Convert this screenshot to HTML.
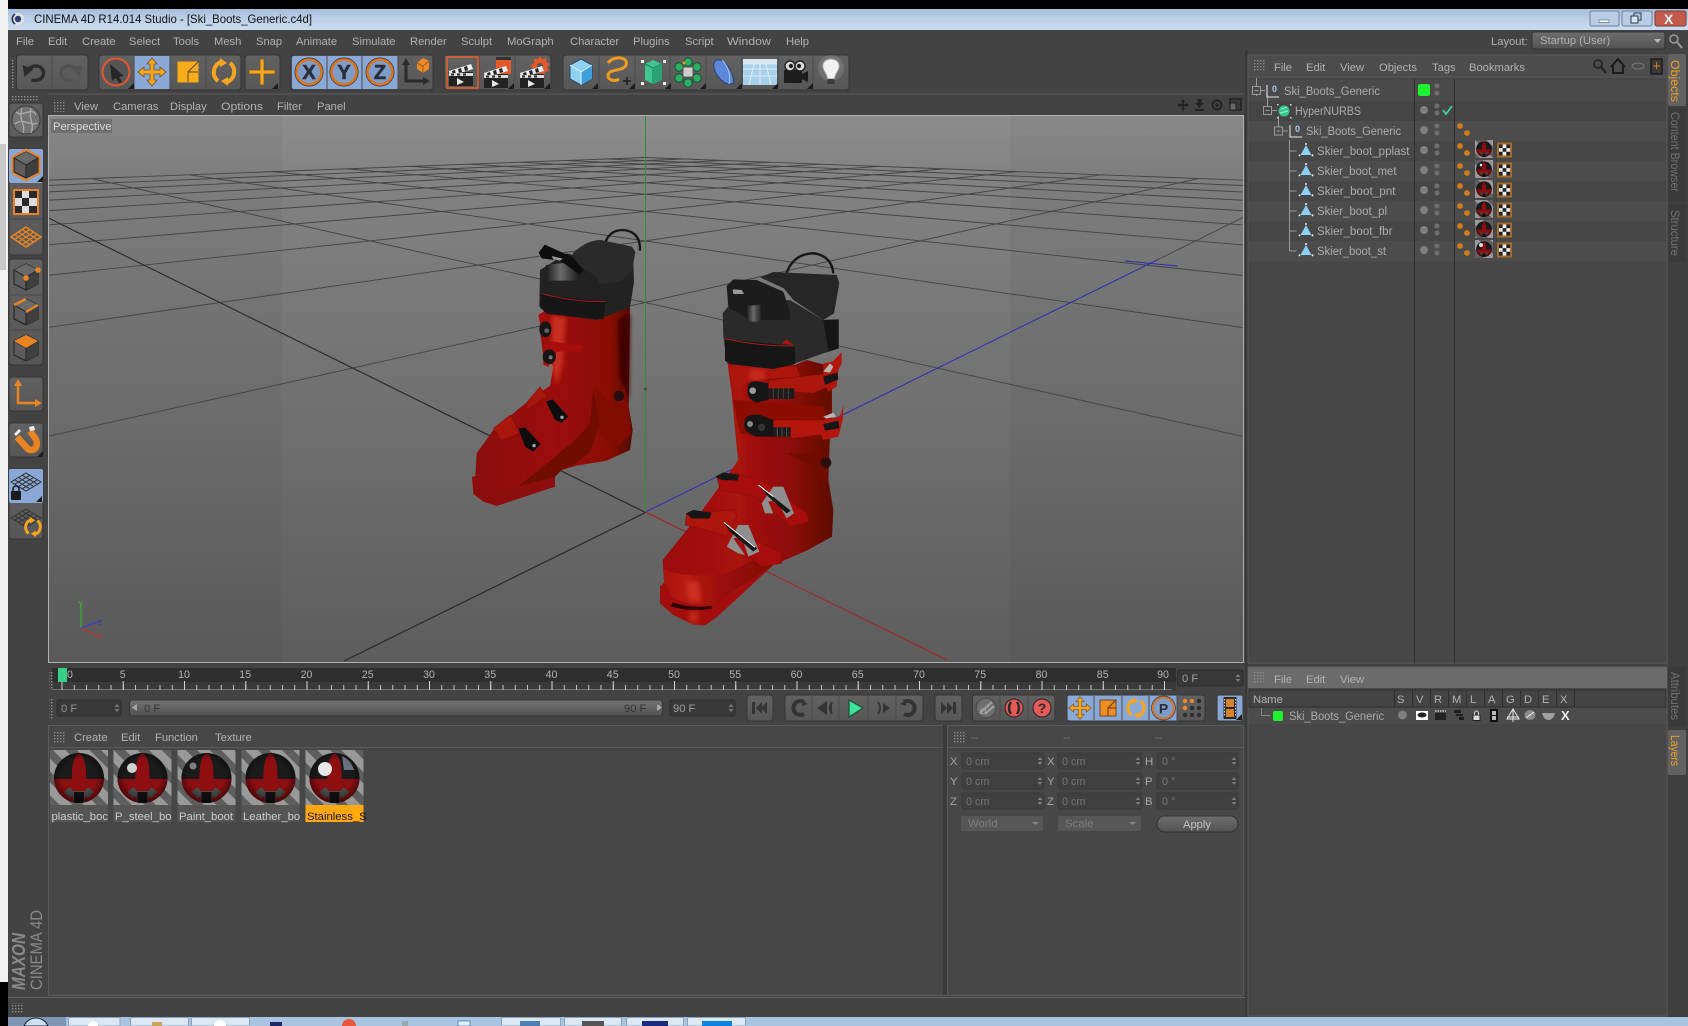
<!DOCTYPE html>
<html><head><meta charset="utf-8"><title>CINEMA 4D</title>
<style>
html,body{margin:0;padding:0;background:#000;width:1688px;height:1026px;overflow:hidden}
svg{display:block;overflow:hidden}
text{font-family:"Liberation Sans",sans-serif;white-space:pre}
.m{font-size:11.2px;fill:#b2b2b2}
.tr{font-size:11.5px;fill:#adadad}
.d{font-size:10.8px;fill:#777}
.l{font-size:11.4px;fill:#a8a8a8}
.n{font-size:10.6px;fill:#b4b4b4;text-anchor:middle}
.v{font-size:11.4px;fill:#7e7e7e}
</style></head><body>
<svg width="1688" height="1026" viewBox="0 0 1688 1026" xmlns="http://www.w3.org/2000/svg">
<defs>
<linearGradient id="tb" x1="0" y1="0" x2="0" y2="1"><stop offset="0" stop-color="#a6bdd9"/><stop offset=".5" stop-color="#bcd0e7"/><stop offset="1" stop-color="#cbdcef"/></linearGradient>
<linearGradient id="vp" x1="0" y1="0" x2="0" y2="1"><stop offset="0" stop-color="#8d8d8d"/><stop offset=".12" stop-color="#828282"/><stop offset="1" stop-color="#5d5d5d"/></linearGradient>
<linearGradient id="btn" x1="0" y1="0" x2="0" y2="1"><stop offset="0" stop-color="#626262"/><stop offset="1" stop-color="#575757"/></linearGradient>
<linearGradient id="sl" x1="0" y1="0" x2="0" y2="1"><stop offset="0" stop-color="#747474"/><stop offset="1" stop-color="#505050"/></linearGradient>
<linearGradient id="drop" x1="0" y1="0" x2="0" y2="1"><stop offset="0" stop-color="#6e6e6e"/><stop offset="1" stop-color="#525252"/></linearGradient>
<linearGradient id="red1" gradientUnits="userSpaceOnUse" x1="106" y1="0" x2="578" y2="0"><stop offset="0" stop-color="#8a0d07"/><stop offset=".5" stop-color="#9c0f08"/><stop offset=".85" stop-color="#8a0c06"/><stop offset="1" stop-color="#4f0704"/></linearGradient>
<linearGradient id="red2" x1="0" y1="0" x2="1" y2="0"><stop offset="0" stop-color="#9c0f08"/><stop offset=".45" stop-color="#a8120a"/><stop offset=".75" stop-color="#8d0c07"/><stop offset="1" stop-color="#5c0805"/></linearGradient>
<linearGradient id="red3" x1="0" y1="0" x2="1" y2="0"><stop offset="0" stop-color="#a8130a"/><stop offset=".2" stop-color="#b81c12"/><stop offset=".35" stop-color="#a8130a"/><stop offset="1" stop-color="#7d0a05"/></linearGradient>
<linearGradient id="gc" x1="0" y1="0" x2="1" y2="0"><stop offset="0" stop-color="#1d1d1d"/><stop offset=".45" stop-color="#6a6a6a"/><stop offset="1" stop-color="#1f1f1f"/></linearGradient>
<filter id="sm" x="-5%" y="-5%" width="110%" height="110%"><feGaussianBlur stdDeviation="1.1"/></filter>
<filter id="bl" x="-50%" y="-50%" width="200%" height="200%"><feGaussianBlur stdDeviation="6"/></filter>
<pattern id="grip" width="3" height="3" patternUnits="userSpaceOnUse"><rect width="1.4" height="1.4" fill="#8d8d8d"/></pattern>
<pattern id="st" width="17" height="17" patternUnits="userSpaceOnUse" patternTransform="rotate(-45)"><rect width="17" height="17" fill="#5e5e5e"/><rect width="9" height="17" fill="#999"/></pattern>
<pattern id="tk" x="61.5" y="685" width="12.25" height="5" patternUnits="userSpaceOnUse"><rect width="1" height="5" fill="#c4c4c4"/></pattern>
<pattern id="tk5" x="61.5" y="681" width="61.25" height="9" patternUnits="userSpaceOnUse"><rect width="1" height="9" fill="#d4d4d4"/></pattern>
<clipPath id="vc"><rect x="49" y="116" width="1194" height="546"/></clipPath>
<clipPath id="sc"><circle cx="29" cy="28" r="25"/></clipPath>
<radialGradient id="shade" cx=".5" cy=".48" r=".5"><stop offset=".6" stop-color="#000" stop-opacity="0"/><stop offset="1" stop-color="#000" stop-opacity=".55"/></radialGradient>
<symbol id="ball" viewBox="0 0 58 55" width="58" height="55"><g clip-path="url(#sc)"><rect width="58" height="55" fill="#1b1b1b"/><rect y="29" width="58" height="26" fill="#8d0f12"/><path d="M22 30 Q21 8 29 3 Q37 8 36 30Z" fill="#8d0f12"/><path d="M14 42 L20 37 L23 41 L35 41 L38 37 L44 42 L38 48 L35 46 L35 54 L23 54 L23 46 L20 48Z" fill="#4a4a4a"/><path d="M24 42 H34 V54 H24Z" fill="#111"/><rect width="58" height="55" fill="url(#shade)"/></g></symbol>
<g id="cube"><path d="M0 -13 L12 -7 V7 L0 13 L-12 7 V-7Z" fill="#5c5c5c" stroke="#2b2b2b" stroke-width="1.3"/><path d="M0 0 L12 -7 V7 L0 13Z" fill="#3f3f3f"/><path d="M0 -13 L12 -7 L0 0 L-12 -7Z" fill="#6a6a6a"/><path d="M0 0 V13 M0 0 L12 -7 M0 0 L-12 -7" stroke="#2b2b2b" stroke-width="1.2" fill="none"/></g>
<g id="clap"><rect x="-13" y="-2" width="24" height="14" fill="#222"/><path d="M-13 -3 L9 -10 L11 -5 L-12 2Z" fill="#eee"/><path d="M-10 -3 l3 -1 l1 4 l-3 1z M-4 -5 l3 -1 l1 4 l-3 1z M2 -7 l3 -1 l1 4 l-3 1z" fill="#222"/><rect x="-13" y="-1" width="24" height="3" fill="#ddd"/><path d="M-11 -.5 h3 v2 h-3z M-5 -.5 h3 v2 h-3z M1 -.5 h3 v2 h-3z" fill="#222"/><path d="M-5 4 L2 8 L-5 11Z" fill="#e8e8e8"/></g>
<g id="mv"><path d="M0 -14 L5 -8 H2 V-2 H8 V-5 L14 0 L8 5 V2 H2 V8 H5 L0 14 L-5 8 H-2 V2 H-8 V5 L-14 0 L-8 -5 V-2 H-2 V-8 H-5Z" fill="#f6a520" stroke="#6a5124" stroke-width=".8"/></g>
<g id="rot"><path d="M-3 -10 A11 11 0 0 0 -6 9" stroke="#f6a520" stroke-width="4" fill="none"/><path d="M3 10 A11 11 0 0 0 6 -9" stroke="#f6a520" stroke-width="4" fill="none"/><path d="M-4 -14 L3 -9 L-4 -5Z M4 14 L-3 9 L4 5Z" fill="#f6a520"/></g>
<g id="dots"><circle cx="0" cy="-4" r="2.5" fill="#6f6f6f"/><circle cx="0" cy="3" r="2.5" fill="#6f6f6f"/></g>
<g id="tag"><circle cx="0" cy="-5" r="2.9" fill="#d07c1c"/><circle cx="7" cy="2" r="2.9" fill="#d07c1c"/></g>
<g id="chk"><rect x="-7.5" y="-7.5" width="15" height="15" fill="#a56a2c"/><rect x="-5.5" y="-5.5" width="11" height="11" fill="#eee"/><path d="M-5.5 -5.5 h3.6 v3.6 h-3.6z M1.8 -5.5 h3.7 v3.6 h-3.7z M-1.9 -1.9 h3.7 v3.7 h-3.7z M-5.5 1.8 h3.6 v3.7 h-3.6z M1.8 1.8 h3.7 v3.7 h-3.7z" fill="#222"/></g>
<g id="mesh"><path d="M-5.5 5 L0 -5 L5.5 5Z" fill="#8fd0f5"/><circle cy="-6" r="1" fill="#eee"/><circle cx="-6.5" cy="5.4" r="1" fill="#eee"/><circle cx="6.5" cy="5.4" r="1" fill="#eee"/></g>
<g id="null0"><path d="M-6 -6 V6 H6" stroke="#c8c8c8" stroke-width="1.3" fill="none"/><text x="-1" y="1" font-size="9" fill="#a9c8ee" font-weight="bold">0</text></g>
<g id="sp"><path d="M-2.5 -1 L0 -4 L2.5 -1Z M-2.5 1 L0 4 L2.5 1Z" fill="#7c7c7c"/></g>
<g id="corner"><path d="M6 0 V6 H0Z" fill="#1c1c1c"/></g>
</defs>

<!-- chrome -->
<rect width="1688" height="1026" fill="#000"/>
<rect x="0" y="0" width="8" height="982" fill="#f0f0f0"/>
<rect x="0" y="144" width="6" height="126" fill="#c9c9c9"/>
<rect x="8" y="9" width="1680" height="21" fill="url(#tb)"/>
<rect x="8" y="30" width="1680" height="987" fill="#434343"/>
<circle cx="18" cy="19" r="6" fill="#dfe3e8"/><circle cx="18" cy="19" r="3.2" fill="#2e3f6c"/><path d="M15 14 a6 6 0 0 0 0 10" stroke="#1e2a4e" stroke-width="1.6" fill="none"/>
<text x="34" y="23" font-size="12" fill="#111" textLength="278" lengthAdjust="spacingAndGlyphs">CINEMA 4D R14.014 Studio - [Ski_Boots_Generic.c4d]</text>
<rect x="1590" y="11" width="29" height="15" rx="2" fill="#b7cde6" stroke="#6f8198"/><rect x="1599" y="20" width="10" height="2.5" fill="#fff" stroke="#4a5a6e" stroke-width=".6"/>
<rect x="1622" y="11" width="30" height="15" rx="2" fill="#b7cde6" stroke="#6f8198"/><rect x="1634" y="13" width="7" height="7" fill="none" stroke="#26364a"/><rect x="1631" y="16" width="7" height="7" fill="#d5e2f0" stroke="#26364a"/>
<rect x="1655" y="11" width="31" height="15" rx="2" fill="#c45a4c" stroke="#7a3a36"/><text x="1664" y="24" font-size="14" font-weight="bold" fill="#f4f4f4">X</text>

<!-- menu -->
<text class="m" x="16" y="45">File</text><text class="m" x="48" y="45">Edit</text><text class="m" x="82" y="45">Create</text><text class="m" x="129" y="45">Select</text><text class="m" x="173" y="45">Tools</text><text class="m" x="214" y="45">Mesh</text><text class="m" x="256" y="45">Snap</text><text class="m" x="296" y="45">Animate</text><text class="m" x="352" y="45">Simulate</text><text class="m" x="410" y="45">Render</text><text class="m" x="461" y="45">Sculpt</text><text class="m" x="507" y="45">MoGraph</text><text class="m" x="570" y="45">Character</text><text class="m" x="633" y="45">Plugins</text><text class="m" x="685" y="45">Script</text><text class="m" x="727" y="45" textLength="44" lengthAdjust="spacingAndGlyphs">Window</text><text class="m" x="786" y="45">Help</text>
<text class="m" x="1491" y="45">Layout:</text>
<rect x="1532" y="32" width="133" height="17" rx="2" fill="url(#drop)" stroke="#333"/><text class="m" x="1540" y="44" fill="#c8c8c8">Startup (User)</text><path d="M1654 39 h7 l-3.5 4z" fill="#bbb"/>
<circle cx="1674" cy="39" r="4" fill="none" stroke="#999" stroke-width="1.5"/><path d="M1677 42 L1682 48" stroke="#999" stroke-width="2"/>

<!-- top toolbar groups -->
<g fill="url(#btn)" stroke="#353535">
<rect x="16.5" y="55" width="71.5" height="35" rx="3"/><rect x="99" y="55" width="142" height="35" rx="3"/><rect x="245" y="55" width="35" height="35" rx="3"/><rect x="291" y="55" width="142" height="35" rx="3"/><rect x="444" y="55" width="107" height="35" rx="3"/><rect x="563" y="55" width="286" height="35" rx="3"/>
</g>
<rect x="134" y="56" width="36" height="33" fill="#89a8d6"/>
<rect x="292" y="56" width="106" height="33" rx="2" fill="#89a8d6"/>
<path d="M52 56 V89 M134 56 V89 M170 56 V89 M206 56 V89 M327 56 V89 M362 56 V89 M398 56 V89 M479 56 V89 M515 56 V89 M599 56 V89 M635 56 V89 M670 56 V89 M706 56 V89 M742 56 V89 M778 56 V89 M813 56 V89" stroke="#4a4a4a"/>
<!-- undo redo -->
<g transform="translate(34.5 72)"><path d="M-7 -1 C-3 -9 10 -7 9 2 C8 8 2 9 -3 8" stroke="#2b2b2b" stroke-width="3.4" fill="none"/><path d="M-12 -7 L-1 -3 L-10 5Z" fill="#2b2b2b"/></g>
<g transform="translate(70 72)"><path d="M7 -1 C3 -9 -10 -7 -9 2 C-8 8 -2 9 3 8" stroke="#525252" stroke-width="3.4" fill="none"/><path d="M12 -7 L1 -3 L10 5Z" fill="#525252"/></g>
<!-- live select -->
<g transform="translate(116 72)"><circle r="13.5" fill="#555" stroke="#e4572e" stroke-width="2"/><path d="M-6 -8 L8 4 L3 5 L6 10 L3 11 L0 6 L-4 9Z" fill="#262626"/><use href="#corner" x="12" y="11"/></g>
<use href="#mv" x="152" y="72"/>
<g transform="translate(188 72)"><rect x="-10.5" y="-10.5" width="21" height="21" fill="#f9ab1a"/><path d="M0 10 V0 H10 M0 0 L11 -11" stroke="#5b4a20" stroke-width="1" fill="none"/></g>
<use href="#rot" x="224" y="72"/>
<g transform="translate(262 72)"><path d="M-2 -13 H2 V-2 H13 V2 H2 V13 H-2 V2 H-13 V-2 H-2Z" fill="#f6a520" stroke="#6a5124" stroke-width=".7"/><use href="#corner" x="10" y="11"/></g>
<!-- xyz -->
<g font-weight="bold" font-size="20" text-anchor="middle" fill="#2b2f3a" stroke="#2b2f3a" stroke-width=".6">
<g transform="translate(309 72)"><circle r="14" fill="none" stroke="#2e3440" stroke-width="1"/><circle r="12.5" fill="#7f9cc8" stroke="#d9741f" stroke-width="2.6"/><text y="7">X</text></g>
<g transform="translate(344 72)"><circle r="14" fill="none" stroke="#2e3440" stroke-width="1"/><circle r="12.5" fill="#7f9cc8" stroke="#d9741f" stroke-width="2.6"/><text y="7">Y</text></g>
<g transform="translate(380 72)"><circle r="14" fill="none" stroke="#2e3440" stroke-width="1"/><circle r="12.5" fill="#7f9cc8" stroke="#d9741f" stroke-width="2.6"/><text y="7">Z</text></g>
</g>
<g transform="translate(415 72)"><path d="M-9 -10 V9 H10" stroke="#2c2c2c" stroke-width="3" fill="none"/><path d="M-13 -7 L-9 -14 L-5 -7Z M8 5 L15 9 L8 13Z" fill="#2c2c2c"/><path d="M2 -9 L8 -14 L14 -11 V-3 L8 1 L2 -3Z" fill="#e8892a"/><path d="M2 -9 L8 -6 L14 -11 M8 -6 V1" stroke="#a85c14" fill="none"/></g>
<!-- render -->
<g transform="translate(462 74)"><use href="#clap"/></g><rect x="447" y="57" width="31" height="31" fill="none" stroke="#e2602a" stroke-width="1.6"/>
<g transform="translate(497 72)"><rect x="-1" y="-15" width="15" height="17" fill="#e25a2b"/><rect x="-1" y="-15" width="15" height="3" fill="#333"/><use href="#clap" y="4"/><use href="#corner" x="11" y="11"/></g>
<g transform="translate(533 72)"><path d="M7 -16 L9 -13 L13 -14 L13 -10 L17 -8 L14 -5 L16 -1 L12 0 L11 3 L7 1 L2 2 L1 -3 L-3 -6 L1 -9 L1 -13 L5 -13Z" fill="#e25a2b"/><circle cx="7" cy="-6" r="3" fill="#555"/><use href="#clap" y="4"/><use href="#corner" x="11" y="11"/></g>
<!-- objects -->
<g transform="translate(581 72)"><path d="M0 -13 L11 -7 V7 L0 13 L-11 7 V-7Z" fill="#8fd0f5" stroke="#26485e"/><path d="M0 0 L11 -7 V7 L0 13Z" fill="#3f9fdd"/><path d="M0 0 L-11 -7 M0 0 L11 -7 M0 0 V13" stroke="#dff3ff" fill="none"/><use href="#corner" x="11" y="11"/></g>
<g transform="translate(617 72)"><path d="M-9 -9 C-3 -17 12 -15 9 -7 C6 0 -9 -4 -9 4 C-9 8 -2 10 2 7" stroke="#f19b1e" stroke-width="3" fill="none"/><path d="M6 9 H14 M10 5 V13" stroke="#2b2b2b" stroke-width="2"/><use href="#corner" x="12" y="11"/></g>
<g transform="translate(653 72)"><path d="M-8 -8 L0 -12 L9 -8 V8 L0 12 L-8 8Z" fill="#3fc58f"/><path d="M-8 -8 L0 -4 L9 -8 M0 -4 V12" stroke="#1e7a58" fill="none"/><path d="M0 -4 L9 -8 V8 L0 12Z" fill="#2aa176"/><g fill="#eee"><rect x="-12" y="-12" width="3" height="3"/><rect x="10" y="-12" width="3" height="3"/><rect x="-12" y="10" width="3" height="3"/><rect x="10" y="10" width="3" height="3"/></g><use href="#corner" x="12" y="11"/></g>
<g transform="translate(688 72)"><g fill="#2fae63" stroke="#174f2e"><circle cy="-10" r="4.2"/><circle cx="9" cy="-5" r="4.2"/><circle cx="9" cy="6" r="4.2"/><circle cy="11" r="4.2"/><circle cx="-9" cy="6" r="4.2"/><circle cx="-9" cy="-5" r="4.2"/></g><rect x="-5" y="-5" width="10" height="10" fill="#cfcfcf" stroke="#555"/><circle cx="-4" cy="-9" r="1.5" fill="#f19b1e"/><use href="#corner" x="12" y="11"/></g>
<g transform="translate(724 72)"><path d="M-8 -12 C0 -14 9 -2 10 11 C4 14 -2 10 -7 3 C-11 -3 -11 -9 -8 -12Z" fill="#5c86d6" stroke="#2c3f6e"/><path d="M-2 -12 C4 -6 7 3 5 12" stroke="#a9c5f2" fill="none"/><use href="#corner" x="12" y="11"/></g>
<g transform="translate(760 72)"><rect x="-17" y="-13" width="34" height="5" fill="#d7e8f4"/><path d="M-17 -8 H17 L17 13 H-17Z" fill="#a9d0ea"/><path d="M-17 -8 H17 M-17 -3 H17 M-17 4 H17 M-6 -8 L-11 13 M0 -8 V13 M6 -8 L11 13" stroke="#e9f4fb" stroke-width=".8" fill="none"/><use href="#corner" x="12" y="11"/></g>
<g transform="translate(795 72)"><rect x="-11" y="-2" width="18" height="13" rx="1" fill="#1d1d1d"/><path d="M7 2 L13 -1 V10 L7 7Z" fill="#1d1d1d"/><circle cx="-5" cy="-6" r="5" fill="#dcdcdc" stroke="#222" stroke-width="1.4"/><circle cx="5" cy="-6" r="5" fill="#dcdcdc" stroke="#222" stroke-width="1.4"/><circle cx="-4" cy="-6" r="2.2" fill="#222"/><circle cx="4" cy="-6" r="2.2" fill="#222"/><use href="#corner" x="12" y="11"/></g>
<g transform="translate(831 72)"><circle cy="-4" r="13" fill="#fff" opacity=".12"/><path d="M0 -13 C7 -13 9 -8 8 -4 C7 0 4 2 3.5 7 H-3.5 C-4 2 -7 0 -8 -4 C-9 -8 -7 -13 0 -13Z" fill="#f2f2f2" stroke="#9a9a9a"/><rect x="-3.5" y="7" width="7" height="5" fill="#3a3a3a"/></g>

<!-- grips -->
<rect x="12" y="58" width="3" height="30" fill="url(#grip)"/>
<rect x="12" y="96" width="26" height="5" fill="url(#grip)"/>

<!-- left bar -->
<rect x="9" y="103" width="34" height="34" rx="3" fill="#5e5e5e" stroke="#353535"/>
<g transform="translate(26 120)"><ellipse rx="14" ry="14" fill="#737373" stroke="#3c3c3c"/><path d="M-10 -8 C-4 -2 6 -14 10 -5 M-11 4 C-4 -3 6 7 11 3 M-4 -12 C-8 0 0 4 -3 13 M5 -12 C2 -2 9 4 5 13" stroke="#a9a9a9" stroke-width="1.4" fill="none"/></g>
<g fill="url(#btn)" stroke="#353535">
<rect x="9" y="149" width="34" height="106" rx="3"/><rect x="9" y="259" width="34" height="106" rx="3"/><rect x="9" y="377" width="34" height="34" rx="3"/><rect x="9" y="423" width="34" height="34" rx="3"/><rect x="9" y="469" width="34" height="70" rx="3"/>
</g>
<rect x="9" y="149" width="34" height="34" rx="2" fill="#89a8d6"/>
<rect x="9" y="469" width="34" height="34" rx="2" fill="#89a8d6"/>
<path d="M10 219 H42 M10 295 H42 M10 330 H42" stroke="#4a4a4a"/>
<g transform="translate(26 165)"><use href="#cube"/><path d="M0 -15.5 L13.5 -8 V8 L0 15.5 L-13.5 8 V-8Z" fill="none" stroke="#e8822a" stroke-width="2"/><use href="#corner" x="11" y="11"/></g>
<g transform="translate(26 202)"><rect x="-12" y="-12" width="24" height="24" fill="#ddd" stroke="#e8822a" stroke-width="2"/><path d="M-11 -11 h7 v7 h-7z M3 -11 h8 v7 h-8z M-4 -4 h7 v8 h-7z M-11 4 h7 v7 h-7z M3 4 h8 v7 h-8z" fill="#2a2a2a"/></g>
<g transform="translate(26 237)"><path d="M0 -10 L15 0 L0 10 L-15 0Z" fill="#5b5b5b" stroke="#ea8422" stroke-width="1.6"/><path d="M-7.5 -5 L7.5 5 M-7.5 5 L7.5 -5 M-3.7 -7.5 L11.3 2.5 M3.7 -7.5 L-11.3 2.5 M-11.3 -2.5 L3.7 7.5 M11.3 -2.5 L-3.7 7.5" stroke="#ea8422" stroke-width="1.2"/></g>
<g transform="translate(26 277)"><use href="#cube"/><circle cx="0" cy="1" r="2.8" fill="#ea8422"/><circle cx="12" cy="-7" r="2.8" fill="#ea8422"/></g>
<g transform="translate(26 312)"><use href="#cube"/><path d="M-12 -7 L0 -13 M0 0 L12 -7" stroke="#ea8422" stroke-width="2.4"/></g>
<g transform="translate(26 348)"><use href="#cube"/><path d="M0 -13 L12 -7 L0 0 L-12 -7Z" fill="#ea8422"/></g>
<g transform="translate(26 394)"><path d="M-8 -11 V9 H12" stroke="#ea8422" stroke-width="2.5" fill="none"/><path d="M-12 -8 L-8 -15 L-4 -8Z M9 5 L16 9 L9 13Z" fill="#ea8422"/></g>
<g transform="translate(26 440)"><path d="M-9 -3 L2 9 C8 13 14 5 9 -2 L4 -9" stroke="#ea8422" stroke-width="6.5" fill="none" stroke-linecap="butt"/><path d="M-12 -6 L-7 -11 L-5 -9 L-10 -4Z M3 -13 L8 -14 L9 -10 L4 -9Z" fill="#eee"/><use href="#corner" x="11" y="11"/></g>
<g transform="translate(26 482)" stroke="#2e2e2e" fill="none"><path d="M0 -9 L15 0 L0 9 L-15 0Z"/><path d="M-7.5 -4.5 L7.5 4.5 M-7.5 4.5 L7.5 -4.5 M-3.7 -6.7 L11.3 2.2 M3.7 -6.7 L-11.3 2.2 M-11.3 -2.2 L3.7 6.7 M11.3 -2.2 L-3.7 6.7"/></g>
<g transform="translate(16 494)"><rect x="-5" y="-3" width="10" height="9" rx="1" fill="#1b1b1b"/><path d="M-3 -3 V-5 A3 3 0 0 1 3 -5 V-3" stroke="#1b1b1b" stroke-width="1.5" fill="none"/></g>
<use href="#corner" x="36" y="496"/>
<g transform="translate(26 518)" stroke="#353535" fill="none"><path d="M0 -9 L15 0 L0 9 L-15 0Z"/><path d="M-7.5 -4.5 L7.5 4.5 M-7.5 4.5 L7.5 -4.5 M-3.7 -6.7 L11.3 2.2 M3.7 -6.7 L-11.3 2.2 M-11.3 -2.2 L3.7 6.7 M11.3 -2.2 L-3.7 6.7"/></g>
<g transform="translate(33 527) scale(.72)"><use href="#rot"/></g>

<!-- viewport header -->
<path d="M48 94 H1243" stroke="#5b5b5b"/>
<rect x="54" y="100" width="12" height="12" fill="url(#grip)"/>
<text class="m" x="74" y="110">View</text><text class="m" x="113" y="110">Cameras</text><text class="m" x="170" y="110">Display</text><text class="m" x="221" y="110" textLength="42" lengthAdjust="spacingAndGlyphs">Options</text><text class="m" x="277" y="110">Filter</text><text class="m" x="317" y="110">Panel</text>
<g fill="#232323"><path d="M1183 99 l2 3 h-1.2 v2 h2 v-1.2 l3 2.2 l-3 2.2 v-1.2 h-2 v2 h1.2 l-2 3 l-2 -3 h1.2 v-2 h-2 v1.2 l-3 -2.2 l3 -2.2 v1.2 h2 v-2 h-1.2z"/><path d="M1197.5 99 h4 v4 h2.5 l-4.5 5 l-4.5 -5 h2.5z M1195 109 h9 v2 h-9z"/></g><circle cx="1217" cy="105" r="4.5" fill="none" stroke="#222" stroke-width="2"/><circle cx="1217" cy="105" r="1.6" fill="#222"/><rect x="1230" y="99" width="11" height="11" fill="#3a3a3a" stroke="#222" stroke-width="1.5"/><rect x="1230" y="103" width="6" height="7" fill="#666" stroke="#222"/>

<!-- viewport -->
<rect x="48.5" y="115.5" width="1195" height="547" fill="url(#vp)" stroke="#b0b0b0"/>
<g clip-path="url(#vc)">
<rect x="49" y="116" width="233" height="546" fill="#000" opacity=".035"/><rect x="1010" y="116" width="233" height="546" fill="#000" opacity=".035"/>
<g stroke="#454545" stroke-width=".95" fill="none">
<path d="M1198.5 178.5 L-289.8 512 M1101 174.8 L-231.5 368 M1016.8 171.6 L-205 302.5 M943.3 168.9 L-189.6 265 M878.7 166.4 L-179.8 240.9 M821.4 164.2 L-173 224 M770.2 162.3 L-167 211.5 M724.2 160.5 L-164 201.8 M682.7 159 L-160.9 194.2 M645 157.5 L-158.3 188"/>
<path d="M91.5 178.5 L1579.8 512 M189 174.8 L1521.5 368 M273.2 171.6 L1495 302.5 M346.7 168.9 L1479.6 265 M411.3 166.4 L1469.8 240.9 M468.6 164.2 L1463 224 M519.8 162.3 L1457 211.5 M565.8 160.5 L1454 201.8 M607.3 159 L1450.9 194.2 M645 157.5 L1448.3 188"/>
<path d="M1157 260 L1312.7 182.9"/>
</g>
<path d="M645.5 512.5 L-22.7 182.9 M645.5 512.5 L344 661" stroke="#2a2a2a" stroke-width="1.2" fill="none"/>
<path d="M645.5 512 L1157 260 M1125 261 L1178 266" stroke="#2d2db0" stroke-width="1" fill="none"/>
<path d="M645.5 512 L947 660" stroke="#a32323" stroke-width="1" fill="none"/>
<path d="M645.5 116 V512" stroke="#2f8f2f" stroke-width="1"/>
<path d="M49 132.5 H1243" stroke="#999" stroke-width=".6" stroke-dasharray="3 2" opacity=".5"/>
<circle cx="645.5" cy="389" r="1.4" fill="#444"/>
</g>
<rect x="51" y="119" width="61" height="14" fill="#6f6f6f"/>
<text class="m" x="53" y="130" style="fill:#d8d8d8">Perspective</text>
<!-- axis widget -->
<path d="M81 628 V604" stroke="#2bbf2b"/><path d="M81 628 L100 637" stroke="#c23232"/><path d="M81 628 L100 621" stroke="#3a3ad0"/><text x="78" y="607" font-size="8" fill="#2bbf2b">Y</text><text x="98" y="639" font-size="7" fill="#c23232">X</text><text x="98" y="625" font-size="7" fill="#3a3ad0">Z</text>

<!-- BOOTS -->
<g clip-path="url(#vc)"><g transform="translate(440 220) scale(.33333)"><g filter="url(#sm)">
<!-- left boot -->
<path d="M497 65 Q510 30 550 30 Q602 35 600 92" stroke="#161616" stroke-width="7" fill="none"/>
<path d="M96 770 L150 760 L195 790 L345 768 L345 800 L170 858 L130 845 L100 822Z" fill="#8c0e08"/>
<path d="M312 270 L300 330 L308 395 L340 440 L330 497 L262 545 L160 630 L110 700 L106 770 L170 815 L230 805 L345 770 L365 750 L410 737 L500 722 L570 690 L578 630 L566 560 L570 260Z" fill="url(#red1)"/>
<path d="M335 285 L378 292 L368 430 L350 495 L335 440Z" fill="#d8382c" filter="url(#bl)" opacity=".75"/>
<path d="M235 800 L400 665 L450 612 L460 500 L480 610 L450 695 L400 735 L365 750 L345 770Z" fill="#6e0906"/>
<path d="M465 495 C490 520 510 550 525 575 L555 480 L570 600 L575 640 L520 690 L480 640Z" fill="#810b06"/>
<path d="M535 300 L570 280 L566 540 L540 470Z" fill="#3f0604" filter="url(#bl)"/>
<path d="M262 545 L300 500 L320 530 L260 570Z M160 625 L210 585 L240 640 L185 660Z" fill="#a8120a" stroke="#6b0905"/>
<path d="M295 285 L310 275 L335 345 L310 360Z M308 375 L340 365 L430 378 L420 395 L350 395 L325 440 L310 435Z" fill="#a8110a"/>
<ellipse cx="316" cy="328" rx="18" ry="24" fill="#151515"/><circle cx="320" cy="332" r="7" fill="#666"/>
<ellipse cx="328" cy="410" rx="20" ry="22" fill="#151515"/><circle cx="332" cy="412" r="6" fill="#777"/>
<path d="M318 545 L338 538 L385 590 L365 608 L345 600Z" fill="#111"/><circle cx="366" cy="592" r="5" fill="#aaa"/>
<path d="M235 625 L255 622 L302 672 L280 695 L255 680Z" fill="#111"/><circle cx="282" cy="677" r="5" fill="#aaa"/>
<circle cx="537" cy="528" r="16" fill="#2a0a08"/>
<path d="M300 150 L298 258 L322 280 L470 300 L570 262 L582 186 L580 130 L470 120 L380 100Z" fill="#242424"/>
<path d="M305 225 L300 262 L322 282 L490 298 L497 245Z" fill="#121212"/>
<path d="M310 222 Q400 246 495 245" stroke="#c41c14" stroke-width="2.5" fill="none"/>
<path d="M318 135 L405 125 L415 182 L320 182Z" fill="url(#gc)"/>
<path d="M398 100 Q440 60 482 60 L576 80 L586 96 L576 152 L540 185 L480 192 Q470 160 430 150Z" fill="#2b2b2b"/>
<path d="M296 98 L314 74 L395 110 L432 150 L420 165 L360 122 L305 115Z" fill="#0e0e0e"/>
<path d="M335 108 L368 116 L360 122 L340 118Z" fill="#999"/>
<!-- right boot -->
<path d="M1040 158 Q1062 100 1122 100 Q1175 108 1180 160" stroke="#121212" stroke-width="7" fill="none"/>
<path d="M660 1100 L672 1088 L815 1150 L965 1060 L1000 1035 L830 1192 L795 1216 L760 1214 L700 1185 L660 1150Z" fill="#a30f08"/>
<path d="M862 425 L875 520 L890 680 L895 720 L860 770 L780 880 L700 980 L668 1020 L672 1085 L700 1135 L760 1155 L815 1160 L960 1070 L1000 1035 L1100 992 L1176 950 L1180 870 L1165 780 L1170 640 L1176 440 L1100 420 L1065 435Z" fill="url(#red2)"/>
<path d="M672 1085 L672 1050 Q760 1078 860 1060 L965 1010 L1000 1035 L815 1160 L760 1155 L700 1135Z" fill="url(#red3)"/>
<path d="M738 1085 L778 1085 L785 1150 L745 1140Z" fill="#d8382c" filter="url(#bl)" opacity=".7"/>
<path d="M690 1158 Q750 1178 815 1166 L815 1158 Q750 1166 700 1148Z" fill="#2a0503"/>
<path d="M745 1175 L775 1172 L772 1212 L748 1205Z" fill="#d1382c" opacity=".6" filter="url(#bl)"/>
<path d="M868 445 L1070 440 L1080 470 L930 480 L900 500 L880 500Z" fill="#ad150c"/>
<path d="M930 445 L975 450 L975 480 L930 485Z" fill="#d8382c" opacity=".6" filter="url(#bl)"/>
<path d="M1040 700 L1120 740 L1150 790 L1165 780 L1165 640 L1176 600 L1176 480 L1160 700Z" fill="#6e0906"/>
<circle cx="1158" cy="728" r="16" fill="#2a0a08"/>
<!-- upper straps -->
<path d="M985 480 L1150 462 L1165 500 L1120 520 L985 510Z" fill="#ab120a" stroke="#6b0905"/>
<path d="M880 540 L1150 560 L1175 640 L1050 660 L900 640Z" fill="#8a0c06"/>
<path d="M1000 600 L1150 600 L1165 640 L1060 655 L1000 625Z" fill="#b4140c" stroke="#6b0905"/>
<path d="M1150 430 L1178 425 L1205 396 L1205 430 L1195 450 L1190 500 L1165 515 L1150 480Z M1140 640 L1150 600 L1200 590 L1210 556 L1208 600 L1195 650 L1150 660Z" fill="#b3130b"/>
<path d="M1150 470 L1192 458 L1195 478 L1155 495Z M1150 612 L1195 602 L1198 625 L1155 632Z" fill="#151515"/>
<path d="M1150 455 L1170 430 L1180 440 L1170 458Z M1150 590 L1180 578 L1188 590 L1160 596Z" fill="#b5b5b5"/>
<path d="M925 495 Q930 480 960 485 L985 490 L985 540 L950 548 Q925 540 922 515Z" fill="#171717"/>
<rect x="985" y="505" width="78" height="32" fill="#1a1a1a"/><path d="M1000 505 v32 M1015 505 v32 M1030 505 v32 M1045 505 v32" stroke="#444" stroke-width="3"/>
<circle cx="938" cy="512" r="10" fill="#9a9a9a"/>
<path d="M915 600 Q920 580 960 585 L1000 600 L1000 650 L950 650 Q915 640 912 615Z" fill="#171717"/>
<rect x="1000" y="622" width="52" height="28" fill="#1a1a1a"/><path d="M1012 622 v28 M1026 622 v28 M1040 622 v28" stroke="#555" stroke-width="3"/>
<circle cx="930" cy="612" r="9" fill="#888"/><circle cx="965" cy="622" r="9" fill="#333" stroke="#777"/>
<!-- lower straps -->
<path d="M830 770 L890 760 L985 790 L1100 880 L1105 905 L1050 920 L1035 905 L950 830 L840 810Z" fill="#a8110a" stroke="#6b0905"/>
<path d="M740 880 L880 870 L890 890 L860 950 L800 930 L735 915Z" fill="#ad130b" stroke="#6b0905"/>
<path d="M880 940 L950 960 L1025 1000 L1025 1030 L965 1040 L900 990Z" fill="#a8110a" stroke="#6b0905"/>
<path d="M826 770 L850 757 L898 765 L892 782 L845 780Z M738 880 L760 870 L815 878 L808 896 L755 895Z" fill="#141414"/>
<path d="M965 850 L1000 800 L1030 800 L1062 880 L1040 895 L1010 840 L985 845 L1000 880 L975 880Z" fill="#8e8e8e"/>
<path d="M860 980 L895 915 L925 915 L958 995 L925 1010 L905 950 L880 955 L915 1005 L895 1000Z" fill="#8e8e8e"/>
<path d="M955 795 L1052 872 L1040 880 L985 830Z" fill="#151515"/><path d="M955 795 L1000 830" stroke="#fff" stroke-width="3"/>
<path d="M850 905 L952 985 L940 995 L870 935Z" fill="#151515"/><path d="M852 907 L945 982" stroke="#fff" stroke-width="3"/>
<!-- cuff -->
<path d="M848 280 L850 350 L855 385 L855 422 L870 432 L1000 447 L1065 430 L1150 400 L1196 385 L1196 298 L1150 300 L1050 240 L950 250 L862 262Z" fill="#2a2a2a"/>
<path d="M855 358 L855 422 L870 432 L1000 447 L1065 432 L1065 378Z" fill="#141414"/>
<path d="M855 356 Q950 378 1062 378" stroke="#bd1b13" stroke-width="2.5" fill="none"/>
<path d="M1025 370 L1040 358 L1060 375Z" fill="#a91710"/>
<path d="M1150 300 L1196 298 L1196 385 L1165 395Z" fill="#161616"/>
<path d="M960 172 L1000 156 L1190 165 L1198 190 L1182 280 L1150 300 L1060 240 L1032 205Z" fill="#282828"/>
<path d="M865 262 L860 198 L880 178 L950 180 L1030 215 L1048 268 L1050 300 L930 300Z" fill="#1f1f1f"/>
<path d="M905 210 L878 208 L880 222 L912 222Z" fill="#9a9a9a"/>
<path d="M920 258 L962 254 L965 305 L925 305Z" fill="url(#gc)"/>
</g></g></g>

<!-- timeline -->
<rect x="52" y="668" width="1124" height="22" fill="#3a3a3a"/>
<rect x="52" y="668" width="1124" height="14" fill="#2e2e2e"/>
<path d="M52 689.5 H1172" stroke="#707070"/>
<rect x="58" y="685" width="1110" height="5" fill="url(#tk)"/>
<rect x="58" y="681" width="1110" height="9" fill="url(#tk5)"/>
<rect x="58" y="668" width="9" height="14" fill="#36cf88"/>
<text class="n" x="70" y="678">0</text><text class="n" x="122.7" y="678">5</text><text class="n" x="184" y="678">10</text><text class="n" x="245.2" y="678">15</text><text class="n" x="306.5" y="678">20</text><text class="n" x="367.7" y="678">25</text><text class="n" x="429" y="678">30</text><text class="n" x="490.2" y="678">35</text><text class="n" x="551.5" y="678">40</text><text class="n" x="612.7" y="678">45</text><text class="n" x="674" y="678">50</text><text class="n" x="735.2" y="678">55</text><text class="n" x="796.5" y="678">60</text><text class="n" x="857.7" y="678">65</text><text class="n" x="919" y="678">70</text><text class="n" x="980.2" y="678">75</text><text class="n" x="1041.5" y="678">80</text><text class="n" x="1102.7" y="678">85</text><text class="n" x="1163" y="678">90</text>
<rect x="49" y="672" width="4" height="18" fill="url(#grip)"/>
<rect x="1177.5" y="670" width="65.5" height="16" rx="2" fill="#383838" stroke="#2c2c2c"/><text class="m" x="1182" y="682" style="fill:#a0a0a0">0 F</text><use href="#sp" x="1238" y="678"/>
<rect x="49" y="699" width="4" height="20" fill="url(#grip)"/>
<rect x="57" y="700" width="64" height="16" rx="2" fill="#383838" stroke="#2c2c2c"/><text class="m" x="61" y="712" style="fill:#949494">0 F</text><use href="#sp" x="117" y="708"/>
<rect x="129.5" y="700" width="533" height="16" rx="3" fill="url(#sl)" stroke="#333"/><path d="M137 704 v7 l-5 -3.5z M657 704 v7 l5 -3.5z" fill="#a6a6a6"/><text class="m" x="144" y="712" style="fill:#333">0 F</text><text class="m" x="624" y="712" style="fill:#333">90 F</text>
<rect x="670" y="700" width="65" height="16" rx="2" fill="#383838" stroke="#2c2c2c"/><text class="m" x="673" y="712" style="fill:#a0a0a0">90 F</text><use href="#sp" x="731" y="708"/>

<!-- playback -->
<g fill="url(#btn)" stroke="#353535">
<rect x="747" y="695" width="26" height="26" rx="3"/><rect x="785" y="695" width="138" height="26" rx="3"/><rect x="935" y="695" width="27" height="26" rx="3"/><rect x="972.5" y="695" width="82.5" height="26" rx="3"/><rect x="1067" y="695" width="138" height="26" rx="3"/><rect x="1217" y="695" width="26" height="26" rx="3"/>
</g>
<rect x="1067.5" y="695.5" width="110" height="25" rx="2" fill="#89a8d6"/>
<rect x="1217.5" y="695.5" width="25" height="25" rx="2" fill="#89a8d6"/>
<path d="M812 696 V720 M839 696 V720 M868 696 V720 M896 696 V720 M1000 696 V720 M1028 696 V720 M1094 696 V720 M1122 696 V720 M1149 696 V720 M1177 696 V720" stroke="#4a4a4a"/>
<g fill="#343434">
<path d="M752 702 h3 v12 h-3z M767 702 v12 l-6 -6z M762 702 v12 l-6 -6z"/>
<path d="M804 702 A7 7 0 1 0 804 714" stroke="#343434" stroke-width="4" fill="none"/><path d="M802 700 l6 4 l-6 2z"/>
<path d="M826 703 v10 l-7 -5z M832 702 q-4 6 0 12" stroke="#343434" stroke-width="2" />
<path d="M878 702 q4 6 0 12" stroke="#343434" stroke-width="2" fill="none"/><path d="M883 703 v10 l7 -5z"/>
<path d="M904 702 A7 7 0 1 1 904 714" stroke="#343434" stroke-width="4" fill="none"/><path d="M906 700 l-6 4 l6 2z"/>
<path d="M941 702 v12 l6 -6z M947 702 v12 l6 -6z M953 702 h3 v12 h-3z"/>
</g>
<path d="M849 700 L863 708 L849 717Z" fill="#3be297" stroke="#1f4a36" stroke-width="1.2"/>
<circle cx="986" cy="708" r="10" fill="#6f6f6f" stroke="#535353" stroke-width="2"/><path d="M980 713 L992 702 M985 714 L994 706" stroke="#a3a3a3" stroke-width="2"/><circle cx="983" cy="711" r="2.5" fill="none" stroke="#a3a3a3"/>
<circle cx="1014" cy="708" r="9" fill="#e65a5a" stroke="#3a2a2a" stroke-width="1.2"/><path d="M1011 702 q-4 6 0 12 M1017 702 q4 6 0 12" stroke="#2a2a2a" stroke-width="2.4" fill="none"/>
<circle cx="1042" cy="708" r="9" fill="#e65a5a" stroke="#3a2a2a" stroke-width="1.2"/><text x="1042" y="713" font-size="14" font-weight="bold" text-anchor="middle" fill="#2a2a2a">?</text>
<g transform="translate(1080 708) scale(.8)"><use href="#mv"/></g>
<g transform="translate(1108 708)"><rect x="-8" y="-8" width="16" height="16" fill="#ef8c24" stroke="#6a4a20"/><path d="M0 8 V0 H8 M0 0 L8 -8" stroke="#5b3a10" fill="none"/></g>
<g transform="translate(1136 708) scale(.78)"><use href="#rot"/></g>
<g transform="translate(1163.5 708)"><circle r="10.5" fill="#7f9cc8" stroke="#d9741f" stroke-width="2"/><circle r="12" fill="none" stroke="#2e3440" stroke-width=".7"/><text y="5.5" font-size="14" font-weight="bold" text-anchor="middle" fill="#2b2f3a">P</text></g>
<g fill="#2d2d2d"><circle cx="1185" cy="701" r="2.2" fill="#e8892a"/><circle cx="1192" cy="701" r="2.2" fill="#e8892a"/><circle cx="1199" cy="701" r="2.2"/><circle cx="1185" cy="708" r="2.2" fill="#e8892a"/><circle cx="1192" cy="708" r="2.2"/><circle cx="1199" cy="708" r="2.2"/><circle cx="1185" cy="715" r="2.2"/><circle cx="1192" cy="715" r="2.2"/><circle cx="1199" cy="715" r="2.2"/></g>
<g transform="translate(1230 708)"><rect x="-6.5" y="-11" width="13" height="22" fill="#2a2a2a"/><rect x="-4" y="-9" width="8" height="8" fill="#d5842b"/><rect x="-4" y="1" width="8" height="8" fill="#d5842b"/><path d="M-5.5 -9 v18 M5.5 -9 v18" stroke="#ccc" stroke-dasharray="1.5 1.5"/></g><use href="#corner" x="1236" y="714"/>

<!-- material panel -->
<rect x="48" y="725" width="895" height="270" fill="#474747"/>
<path d="M48.5 725 V995 M48 725.5 H943 M48 747.5 H943" stroke="#5a5a5a"/>
<rect x="54" y="731" width="12" height="12" fill="url(#grip)"/>
<text class="m" x="74" y="741">Create</text><text class="m" x="121" y="741">Edit</text><text class="m" x="155" y="741">Function</text><text class="m" x="215" y="741">Texture</text>
<g>
<rect x="50" y="750" width="58" height="55" fill="url(#st)"/><use href="#ball" x="50" y="750"/><rect x="50" y="805" width="58" height="17" fill="#555"/><text class="tr" x="51.5" y="820" style="font-size:11.3px;fill:#cccccc">plastic_boc</text>
<rect x="113.5" y="750" width="58" height="55" fill="url(#st)"/><use href="#ball" x="113.5" y="750"/><circle cx="132" cy="768" r="5" fill="#fff" opacity=".8"/><rect x="113.5" y="805" width="58" height="17" fill="#555"/><text class="tr" x="115" y="820" style="font-size:11.3px;fill:#cccccc">P_steel_bo</text>
<rect x="177.5" y="750" width="58" height="55" fill="url(#st)"/><use href="#ball" x="177.5" y="750"/><circle cx="193" cy="766" r="3.5" fill="#aaa" opacity=".7"/><rect x="177.5" y="805" width="58" height="17" fill="#555"/><text class="tr" x="179" y="820" style="font-size:11.3px;fill:#cccccc">Paint_boot</text>
<rect x="241.5" y="750" width="58" height="55" fill="url(#st)"/><use href="#ball" x="241.5" y="750"/><rect x="241.5" y="805" width="58" height="17" fill="#555"/><text class="tr" x="243" y="820" style="font-size:11.3px;fill:#cccccc">Leather_bo</text>
<rect x="305.5" y="750" width="58" height="55" fill="url(#st)"/><use href="#ball" x="305.5" y="750"/><circle cx="325" cy="769" r="7" fill="#fff" opacity=".9"/><path d="M342 756 a22 22 0 0 1 12 14 l-10 0z" fill="#8a94a8" opacity=".7"/><rect x="305.5" y="805" width="58" height="17" fill="#ffa90f"/><text class="tr" x="307" y="820" style="font-size:11.3px;fill:#161616">Stainless_S</text>
</g>

<!-- coord panel -->
<rect x="943" y="725" width="4" height="270" fill="#3a3a3a"/>
<rect x="947" y="725" width="296" height="270" fill="#474747"/>
<path d="M947 725.5 H1243 M947 747.5 H1243 M947.5 725 V995 M1243.5 725 V995" stroke="#5a5a5a"/>
<rect x="953" y="731" width="12" height="12" fill="url(#grip)"/>
<text class="d" x="971" y="741">--</text><text class="d" x="1063" y="741">--</text><text class="d" x="1155" y="741">--</text>
<g fill="#404040" stroke="#3a3a3a">
<rect x="962" y="753" width="82" height="16" rx="2"/><rect x="1058" y="753" width="84" height="16" rx="2"/><rect x="1157" y="753" width="81" height="16" rx="2"/>
<rect x="962" y="773" width="82" height="16" rx="2"/><rect x="1058" y="773" width="84" height="16" rx="2"/><rect x="1157" y="773" width="81" height="16" rx="2"/>
<rect x="962" y="793" width="82" height="16" rx="2"/><rect x="1058" y="793" width="84" height="16" rx="2"/><rect x="1157" y="793" width="81" height="16" rx="2"/>
</g>
<text class="l" x="950" y="765">X</text><text class="l" x="1047" y="765">X</text><text class="l" x="1145" y="765">H</text><text class="l" x="950" y="785">Y</text><text class="l" x="1047" y="785">Y</text><text class="l" x="1145" y="785">P</text><text class="l" x="950" y="805">Z</text><text class="l" x="1047" y="805">Z</text><text class="l" x="1145" y="805">B</text>
<text class="d" x="966" y="765">0 cm</text><text class="d" x="1062" y="765">0 cm</text><text class="d" x="1162" y="765">0 °</text>
<text class="d" x="966" y="785">0 cm</text><text class="d" x="1062" y="785">0 cm</text><text class="d" x="1162" y="785">0 °</text>
<text class="d" x="966" y="805">0 cm</text><text class="d" x="1062" y="805">0 cm</text><text class="d" x="1162" y="805">0 °</text>
<use href="#sp" x="1040" y="761"/><use href="#sp" x="1138" y="761"/><use href="#sp" x="1234" y="761"/><use href="#sp" x="1040" y="781"/><use href="#sp" x="1138" y="781"/><use href="#sp" x="1234" y="781"/><use href="#sp" x="1040" y="801"/><use href="#sp" x="1138" y="801"/><use href="#sp" x="1234" y="801"/>
<rect x="961" y="816" width="82" height="15" rx="2" fill="#575757"/><text class="v" x="968" y="827">World</text><path d="M1032 822 h7 l-3.5 3z" fill="#888"/>
<rect x="1058" y="816" width="83" height="15" rx="2" fill="#575757"/><text class="v" x="1065" y="827">Scale</text><path d="M1129 822 h7 l-3.5 3z" fill="#888"/>
<rect x="1157" y="816" width="81" height="16" rx="8" fill="url(#drop)" stroke="#333"/><text class="m" x="1183" y="828" style="fill:#c4c4c4">Apply</text>

<!-- left bottom logo -->
<text transform="translate(25 990) rotate(-90)" font-size="18" font-weight="bold" font-style="italic" fill="#8a8a8a" textLength="57" lengthAdjust="spacingAndGlyphs">MAXON</text>
<text transform="translate(42 990) rotate(-90)" font-size="17" fill="#8a8a8a" textLength="80" lengthAdjust="spacingAndGlyphs">CINEMA 4D</text>
<path d="M48 995.5 H1243" stroke="#5c5c5c"/><path d="M8 997.5 H1247" stroke="#616161"/>
<rect x="12" y="1003" width="12" height="11" fill="url(#grip)"/>

<!-- objects panel -->
<rect x="1245" y="50" width="3" height="967" fill="#3a3a3a"/>
<rect x="1248" y="55" width="419" height="608" fill="#474747" stroke="#5a5a5a"/>
<rect x="1248" y="55" width="419" height="22" fill="#4c4c4c" stroke="#5a5a5a"/>
<rect x="1254" y="60" width="12" height="12" fill="url(#grip)"/>
<text class="m" x="1274" y="71">File</text><text class="m" x="1306" y="71">Edit</text><text class="m" x="1340" y="71">View</text><text class="m" x="1379" y="71">Objects</text><text class="m" x="1432" y="71">Tags</text><text class="m" x="1469" y="71">Bookmarks</text>
<circle cx="1598" cy="64" r="4" fill="none" stroke="#222" stroke-width="1.6"/><path d="M1601 67 L1606 73" stroke="#222" stroke-width="2"/>
<path d="M1611 67 L1618 59 L1625 67 M1613 66 V73 H1623 V66" stroke="#181818" stroke-width="1.8" fill="none"/>
<ellipse cx="1638" cy="66" rx="6" ry="3" fill="none" stroke="#777"/>
<rect x="1651" y="59" width="11" height="15" fill="#3a3a3a" stroke="#161616" stroke-width="1.3"/><path d="M1656.5 62 v7 M1653 66 h7" stroke="#d07c1c"/>
<!-- rows -->
<rect x="1249" y="80" width="417" height="21" fill="#4a4a4a"/><rect x="1249" y="101" width="417" height="20" fill="#454545"/><rect x="1249" y="121" width="417" height="20" fill="#4c4c4c"/><rect x="1249" y="141" width="417" height="20" fill="#474747"/><rect x="1249" y="161" width="417" height="20" fill="#4c4c4c"/><rect x="1249" y="181" width="417" height="20" fill="#474747"/><rect x="1249" y="201" width="417" height="20" fill="#4c4c4c"/><rect x="1249" y="221" width="417" height="20" fill="#474747"/><rect x="1249" y="241" width="417" height="20" fill="#4c4c4c"/>
<path d="M1414.5 79 V663 M1454.5 79 V663" stroke="#2f2f2f"/>
<!-- tree lines -->
<g stroke="#9a9a9a" fill="none"><rect x="1252.5" y="86.5" width="8" height="8"/><path d="M1254.5 90.5 h4 M1261 90.5 h4 M1256.5 78 v8 M1256.5 95 v1"/><rect x="1263.5" y="106.5" width="8" height="8"/><path d="M1265.5 110.5 h4 M1272 110.5 h5 M1267.5 95 v11"/><rect x="1274.5" y="127" width="8" height="8"/><path d="M1276.5 131 h4 M1283 131 h5 M1278.5 116 v11"/><path d="M1289.5 140 V251 M1289.5 151 h7 M1289.5 171 h7 M1289.5 191 h7 M1289.5 211 h7 M1289.5 231 h7 M1289.5 251 h7"/></g>
<use href="#null0" x="1273" y="91"/><use href="#null0" x="1296" y="131"/>
<g transform="translate(1284 111)"><circle r="5.5" fill="#36c88a"/><path d="M-3 -2 L3 -4 M-4 2 L4 0" stroke="#9ff0d0" fill="none"/><g fill="#ddd"><rect x="-7" y="-7" width="1.5" height="1.5"/><rect x="6" y="-7" width="1.5" height="1.5"/><rect x="-7" y="6" width="1.5" height="1.5"/><rect x="6" y="6" width="1.5" height="1.5"/></g></g>
<use href="#mesh" x="1306" y="150"/><use href="#mesh" x="1306" y="170"/><use href="#mesh" x="1306" y="190"/><use href="#mesh" x="1306" y="210"/><use href="#mesh" x="1306" y="230"/><use href="#mesh" x="1306" y="250"/>
<text class="tr" x="1284" y="95" textLength="96" lengthAdjust="spacingAndGlyphs">Ski_Boots_Generic</text><text class="tr" x="1295" y="115" textLength="66" lengthAdjust="spacingAndGlyphs">HyperNURBS</text><text class="tr" x="1306" y="135" textLength="95" lengthAdjust="spacingAndGlyphs">Ski_Boots_Generic</text>
<text class="tr" x="1317" y="155" textLength="92.5" lengthAdjust="spacingAndGlyphs">Skier_boot_pplast</text><text class="tr" x="1317" y="175" textLength="79.5" lengthAdjust="spacingAndGlyphs">Skier_boot_met</text><text class="tr" x="1317" y="195" textLength="78.5" lengthAdjust="spacingAndGlyphs">Skier_boot_pnt</text><text class="tr" x="1317" y="215" textLength="70" lengthAdjust="spacingAndGlyphs">Skier_boot_pl</text><text class="tr" x="1317" y="235" textLength="75.5" lengthAdjust="spacingAndGlyphs">Skier_boot_fbr</text><text class="tr" x="1317" y="255" textLength="69" lengthAdjust="spacingAndGlyphs">Skier_boot_st</text>
<rect x="1418" y="84" width="12" height="12" rx="2" fill="#1ff02f"/>
<g fill="#7f7f7f"><circle cx="1424" cy="110" r="4"/><circle cx="1424" cy="130" r="4"/><circle cx="1424" cy="150" r="4"/><circle cx="1424" cy="170" r="4"/><circle cx="1424" cy="190" r="4"/><circle cx="1424" cy="210" r="4"/><circle cx="1424" cy="230" r="4"/><circle cx="1424" cy="250" r="4"/></g>
<use href="#dots" x="1437" y="90"/><use href="#dots" x="1437" y="110"/><use href="#dots" x="1437" y="130"/><use href="#dots" x="1437" y="150"/><use href="#dots" x="1437" y="170"/><use href="#dots" x="1437" y="190"/><use href="#dots" x="1437" y="210"/><use href="#dots" x="1437" y="230"/><use href="#dots" x="1437" y="250"/>
<path d="M1443 110 L1446 114 L1452 106" stroke="#3fd2a0" stroke-width="1.8" fill="none"/>
<use href="#tag" x="1460" y="131"/><use href="#tag" x="1460" y="151"/><use href="#tag" x="1460" y="171"/><use href="#tag" x="1460" y="191"/><use href="#tag" x="1460" y="211"/><use href="#tag" x="1460" y="231"/><use href="#tag" x="1460" y="251"/>
<rect x="1475" y="140" width="18" height="18" fill="url(#st)"/><use href="#ball" x="1475" y="140" width="18" height="18"/>
<rect x="1475" y="160" width="18" height="18" fill="url(#st)"/><use href="#ball" x="1475" y="160" width="18" height="18"/><circle cx="1481" cy="165" r="1.3" fill="#fff"/>
<rect x="1475" y="180" width="18" height="18" fill="url(#st)"/><use href="#ball" x="1475" y="180" width="18" height="18"/>
<rect x="1475" y="200" width="18" height="18" fill="url(#st)"/><use href="#ball" x="1475" y="200" width="18" height="18"/>
<rect x="1475" y="220" width="18" height="18" fill="url(#st)"/><use href="#ball" x="1475" y="220" width="18" height="18"/>
<rect x="1475" y="240" width="18" height="18" fill="url(#st)"/><use href="#ball" x="1475" y="240" width="18" height="18"/><circle cx="1481" cy="245" r="2" fill="#ddd"/>
<use href="#chk" x="1504.5" y="150"/><use href="#chk" x="1504.5" y="170"/><use href="#chk" x="1504.5" y="190"/><use href="#chk" x="1504.5" y="210"/><use href="#chk" x="1504.5" y="230"/><use href="#chk" x="1504.5" y="250"/>

<!-- right tabs -->
<rect x="1668" y="55" width="20" height="962" fill="#3f3f3f"/>
<rect x="1668" y="54" width="18" height="52" rx="2" fill="#626262"/>
<rect x="1668" y="108" width="18" height="94" fill="#3a3a3a"/><rect x="1668" y="204" width="18" height="58" fill="#3a3a3a"/>
<rect x="1668" y="667" width="18" height="60" fill="#3a3a3a"/>
<rect x="1668" y="730" width="18" height="45" rx="2" fill="#626262"/>
<text transform="translate(1671 60) rotate(90)" font-size="11.5" fill="#f0a020" textLength="42" lengthAdjust="spacingAndGlyphs">Objects</text>
<text transform="translate(1671 112) rotate(90)" font-size="11.5" fill="#717171" textLength="80" lengthAdjust="spacingAndGlyphs">Content Browser</text>
<text transform="translate(1671 210) rotate(90)" font-size="11.5" fill="#717171" textLength="46" lengthAdjust="spacingAndGlyphs">Structure</text>
<text transform="translate(1671 672) rotate(90)" font-size="11.5" fill="#717171" textLength="48" lengthAdjust="spacingAndGlyphs">Attributes</text>
<text transform="translate(1671 735) rotate(90)" font-size="11.5" fill="#f0a020" textLength="31" lengthAdjust="spacingAndGlyphs">Layers</text>

<!-- layers panel -->
<rect x="1248" y="667" width="419" height="349" fill="#474747" stroke="#5a5a5a"/>
<rect x="1248" y="667" width="419" height="21" fill="#6b6b6b"/>
<rect x="1253" y="672" width="11" height="11" fill="url(#grip)"/>
<text class="m" x="1274" y="683">File</text><text class="m" x="1306" y="683">Edit</text><text class="m" x="1340" y="683">View</text>
<rect x="1249" y="690" width="417" height="17" fill="#444" stroke="#2f2f2f"/>
<path d="M1394.5 690 V707 M1412.5 690 V707 M1430.5 690 V707 M1448.5 690 V707 M1466.5 690 V707 M1484.5 690 V707 M1502.5 690 V707 M1520.5 690 V707 M1538.5 690 V707 M1556.5 690 V707 M1574.5 690 V707" stroke="#2f2f2f"/>
<text class="m" x="1253" y="703">Name</text><text class="m" x="1397" y="703">S</text><text class="m" x="1416" y="703">V</text><text class="m" x="1434" y="703">R</text><text class="m" x="1452" y="703">M</text><text class="m" x="1470" y="703">L</text><text class="m" x="1488" y="703">A</text><text class="m" x="1506" y="703">G</text><text class="m" x="1524" y="703">D</text><text class="m" x="1542" y="703">E</text><text class="m" x="1560" y="703">X</text>
<rect x="1249" y="708" width="417" height="16" fill="#4c4c4c"/>
<path d="M1261.5 708 V715.5 H1270" stroke="#8a8a8a" fill="none"/>
<rect x="1273" y="711" width="10" height="10" rx="2" fill="#1ff02f"/>
<text class="tr" x="1289" y="720" textLength="95" lengthAdjust="spacingAndGlyphs">Ski_Boots_Generic</text>
<circle cx="1402.5" cy="715" r="4.5" fill="#7f7f7f"/>
<rect x="1416" y="711" width="12" height="9" fill="#fff"/><ellipse cx="1422" cy="715" rx="4.5" ry="2.5" fill="#222"/>
<rect x="1435" y="713" width="11" height="7" fill="#222"/><path d="M1435 711 h11" stroke="#ccc" stroke-dasharray="1.5 1" stroke-width="1.5"/>
<path d="M1454 710 h7 v3 h-7z M1456 714 h7 v2 h-7z M1459 717 h5 v3 h-5z" fill="#1e1e1e"/>
<rect x="1473" y="715" width="7" height="5.5" fill="#ddd" stroke="#222"/><path d="M1474.5 715 v-2 a2 2 0 0 1 4 0 v2" stroke="#ccc" fill="none"/>
<rect x="1490" y="709" width="8" height="13" fill="#111"/><rect x="1492" y="711" width="4" height="4" fill="#bbb"/><rect x="1492" y="716" width="4" height="4" fill="#bbb"/>
<path d="M1513 709 L1519 719 L1507 719Z M1513 709 V722 M1507 717 H1519" stroke="#e6e6e6" fill="none"/>
<ellipse cx="1530" cy="715" rx="5.5" ry="5" fill="#8a8a8a"/><path d="M1526 718 L1534 712" stroke="#eee"/>
<path d="M1542 713 H1555 Q1553 720 1548.5 720 Q1544 720 1542 713Z" fill="#a0a0a0"/>
<text x="1561" y="720" font-size="13" font-weight="bold" fill="#eee">X</text>

<!-- taskbar -->
<rect x="8" y="1017" width="1680" height="9" fill="#a9c4e0"/>
<rect x="8" y="1017" width="58" height="9" fill="#7f97b4"/><path d="M24 1026 A13 13 0 0 1 48 1026Z" fill="#cfe0f2" stroke="#12223a"/>
<g fill="#dbe7f3" stroke="#8ba2bb"><path d="M68.5 1026 V1018 Q68.5 1017.5 70 1017.5 H120 V1026Z"/><path d="M130.5 1026 V1018 Q130.5 1017.5 132 1017.5 H188.5 V1026Z"/><path d="M191.5 1026 V1018 Q191.5 1017.5 193 1017.5 H249.5 V1026Z"/><path d="M501.5 1026 V1018 Q501.5 1017.5 503 1017.5 H560.5 V1026Z"/><path d="M564.5 1026 V1018 Q564.5 1017.5 566 1017.5 H621.5 V1026Z"/><path d="M626.5 1026 V1018 Q626.5 1017.5 628 1017.5 H683.5 V1026Z"/><path d="M687.5 1026 V1018 Q687.5 1017.5 689 1017.5 H745.5 V1026Z"/></g>
<path d="M88 1026 A5 5 0 0 1 98 1026Z" fill="#fff"/><rect x="152" y="1022" width="10" height="4" fill="#c9a45c"/><path d="M214 1026 A6 6 0 0 1 226 1026Z" fill="#fff"/>
<rect x="270" y="1022" width="12" height="4" fill="#1a2a66"/><path d="M342 1026 A7 7 0 0 1 356 1026Z" fill="#e8583a"/><rect x="402" y="1021" width="6" height="5" fill="#9aa"/><rect x="458" y="1021" width="12" height="5" fill="#e9f2fa" stroke="#5b8fc4"/>
<rect x="520" y="1021" width="20" height="5" fill="#4f7fb5"/><rect x="582" y="1021" width="22" height="5" fill="#555"/><rect x="642" y="1021" width="26" height="5" fill="#1a2a80"/><rect x="702" y="1021" width="30" height="5" fill="#0a84e0"/>
</svg>
</body></html>
